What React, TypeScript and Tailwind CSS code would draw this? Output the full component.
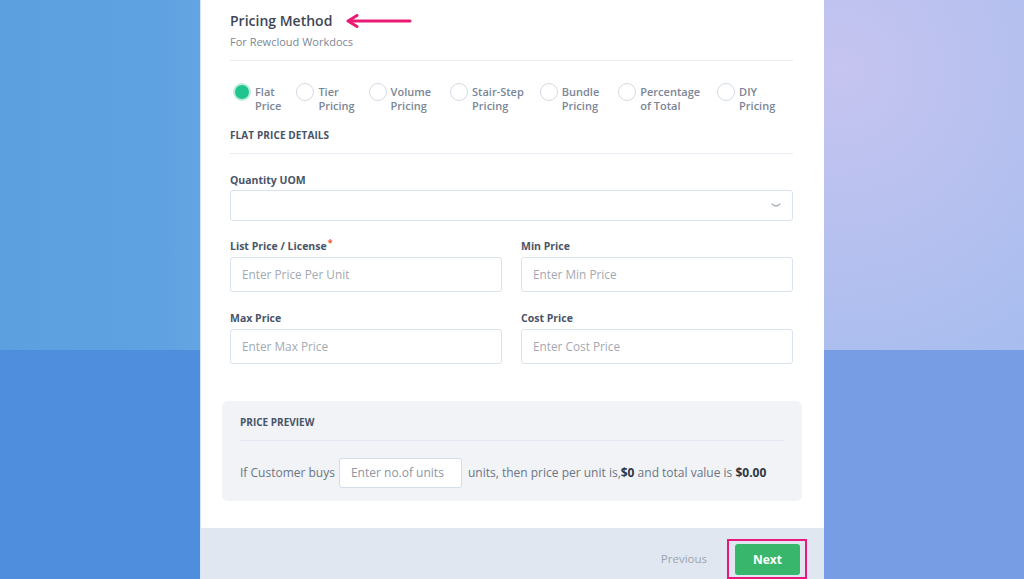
import React from "react";

const radios: [string, string, number][] = [
  ["Flat", "Price", 0],
  ["Tier", "Pricing", 15],
  ["Volume", "Pricing", 14],
  ["Stair-Step", "Pricing", 19],
  ["Bundle", "Pricing", 16],
  ["Percentage", "of Total", 19],
  ["DIY", "Pricing", 17],
];

function Field({ label, placeholder, required }: { label: string; placeholder: string; required?: boolean }) {
  return (
    <div className="flex flex-col">
      <div className="h-[14px] text-[10.5px] leading-[14px] font-bold text-[#4a5568]">
        {label}
        {required && <span className="text-[#f0502a] relative -top-[4px] ml-[1px] text-[9px] leading-none">*</span>}
      </div>
      <div className="mt-[4px] h-[35px] border border-[#d9e2f0] rounded-[3px] bg-white flex items-center px-[11px] text-[11.8px] text-[#a3a9b2]">
        {placeholder}
      </div>
    </div>
  );
}

export default function App() {
  return (
    <div className="relative h-[579px] w-[1024px] overflow-hidden" style={{ fontFamily: '"Open Sans", "Noto Sans", sans-serif' }}>
      <div className="absolute inset-0 flex flex-col">
        <div className="h-[350px] bg-[radial-gradient(circle_at_82%_20%,#c6c4f0_0%,#b4c0ef_22%,#a1bcee_45%,transparent_60%),linear-gradient(to_right,#5ca0e0_0%,#5ea2e1_15%,#76a8e6_30%,#a9bdf0_70%,#a0bbee_100%)]" />
        <div className="flex-1 bg-[linear-gradient(to_right,#4f8edd_0%,#4f8edd_20%,#6896e0_50%,#779ee4_80%,#779ee4_100%)]" />
      </div>

      <div className="relative mx-auto w-[624px] h-[579px] bg-white flex flex-col border-l border-[#d6e4f7]">
        <div className="pl-[29px] pr-[31px] flex flex-col">
          <div className="pt-[12px] flex items-center gap-[14px]">
            <div className="text-[14px] leading-[18px] font-semibold text-[#3d4654]">Pricing Method</div>
            <svg width="66" height="14" viewBox="0 0 66 14">
              <line x1="6" y1="7" x2="64" y2="7" stroke="#ea1a73" strokeWidth="3" strokeLinecap="round" />
              <path d="M11 1.5 L2 7 L11 12.5" fill="none" stroke="#ea1a73" strokeWidth="3" strokeLinecap="round" strokeLinejoin="round" />
            </svg>
          </div>
          <div className="mt-[4px] text-[11px] leading-[16px] text-[#7d8795]">For Rewcloud Workdocs</div>
          <div className="mt-[10px] border-b border-[#e8edf4]" />

          <div className="mt-[24px] flex items-start pl-[3px]">
            {radios.map(([a, b, ml], i) => (
              <div key={i} className="flex items-start gap-[4px]" style={{ marginLeft: ml }}>
                {i === 0 ? (
                  <div className="mt-[-2px] w-[18px] h-[18px] rounded-full bg-[#bdeedd] flex items-center justify-center">
                    <div className="w-[14px] h-[14px] rounded-full bg-[#1fc48f]" />
                  </div>
                ) : (
                  <div className="mt-[-2px] w-[18px] h-[18px] rounded-full border-[1.5px] border-[#d3dbe6] bg-white" />
                )}
                <div className="text-[11px] leading-[14px] font-semibold text-[#7b8696]">
                  <div>{a}</div>
                  <div>{b}</div>
                </div>
              </div>
            ))}
          </div>

          <div className="mt-[15px] text-[10px] leading-[14px] font-bold text-[#475366] tracking-[0.1px]">FLAT PRICE DETAILS</div>
          <div className="mt-[11px] border-b border-[#e8edf4]" />

          <div className="mt-[19px] text-[10.5px] leading-[14px] font-bold text-[#4a5568]">Quantity UOM</div>
          <div className="mt-[3px] h-[31px] border border-[#d9e2f0] rounded-[3px] bg-white flex items-center justify-end pr-[11px]">
            <svg width="10" height="6" viewBox="0 0 10 6">
              <path d="M1 1 Q5 5 9 1" fill="none" stroke="#a9b1bc" strokeWidth="1.3" strokeLinecap="round" />
            </svg>
          </div>

          <div className="mt-[18px] grid grid-cols-2 gap-x-[19px]">
            <Field label="List Price / License" placeholder="Enter Price Per Unit" required />
            <Field label="Min Price" placeholder="Enter Min Price" />
          </div>
          <div className="mt-[19px] grid grid-cols-2 gap-x-[19px]">
            <Field label="Max Price" placeholder="Enter Max Price" />
            <Field label="Cost Price" placeholder="Enter Cost Price" />
          </div>

          <div className="mt-[37px] -ml-[8px] -mr-[9px] h-[100px] rounded-[6px] bg-[#f1f3f6] px-[18px] pt-[14px]">
            <div className="text-[10px] leading-[14px] font-bold text-[#475366]">PRICE PREVIEW</div>
            <div className="mt-[11px] border-b border-[#e1e8f1]" />
            <div className="mt-[17px] flex items-center text-[12px] text-[#6b7684]">
              <span>If Customer buys</span>
              <div className="ml-[4px] mr-[6px] w-[123px] h-[30px] bg-white border border-[#d3ddeb] rounded-[3px] flex items-center px-[11px] text-[#8d96a2]">
                Enter no.of units
              </div>
              <span>
                units, then price per unit is,<b className="text-[#2f3844]">$0</b> and total value is <b className="text-[#2f3844]">$0.00</b>
              </span>
            </div>
          </div>
        </div>

        <div className="mt-[27px] flex-1 bg-[#e1e7f0] flex items-start justify-end pt-[16px] pr-[24px]">
          <div className="mt-[7px] text-[11.5px] leading-[16px] text-[#9ba4b0] mr-[28px]">Previous</div>
          <div className="relative">
            <div className="absolute -left-[8px] -right-[7px] -top-[5px] -bottom-[4px] border-[2px] border-[#e8197a]" />
            <div className="w-[65px] h-[31px] rounded-[3px] bg-[#38b76c] flex items-center justify-center text-white text-[12px] font-bold">Next</div>
          </div>
        </div>
      </div>
    </div>
  );
}
